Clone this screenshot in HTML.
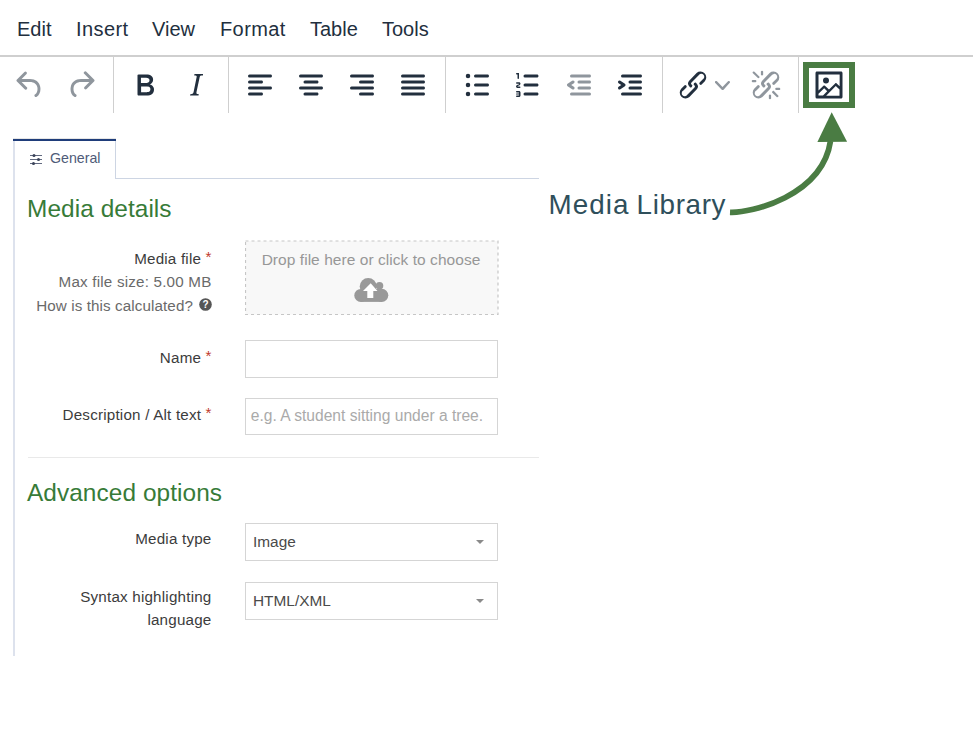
<!DOCTYPE html>
<html>
<head>
<meta charset="utf-8">
<title>Media Library</title>
<style>
html,body{margin:0;padding:0;background:#fff;}
body{width:973px;height:750px;position:relative;overflow:hidden;font-family:"Liberation Sans",sans-serif;}
.abs{position:absolute;}
.menu span{position:absolute;top:16.700px;font-size:20px;line-height:24px;color:#222f3e;white-space:nowrap;}
.hline{position:absolute;left:0;top:55.400px;width:973px;height:1.600px;background:#cfcfcf;}
.vsep{position:absolute;top:57px;width:1px;height:56px;background:#cfcfcf;}
.ic{position:absolute;width:36px;height:36px;fill:#222f3e;}
.ic.dis{fill:#222f3e;opacity:.5;}
.lbl{position:absolute;right:761.500px;white-space:nowrap;font-size:15.200px;letter-spacing:.2px;line-height:23px;color:#3c3c3c;text-align:right;}
.lbl .req{color:#c0392b;position:relative;top:-2px;letter-spacing:0;}
.sub{color:#6a6a6a;}
.h2{position:absolute;left:27px;font-size:24.400px;letter-spacing:.07px;line-height:28px;color:#377b38;white-space:nowrap;}
.inp{position:absolute;left:245px;width:251px;height:36px;border:1px solid #d5d5d5;background:#fff;font-size:15.4px;color:#aaa;}
.inp span{position:absolute;left:7px;top:6.500px;line-height:22px;white-space:nowrap;}
.sel span{color:#4a4a4a;}
.caret{position:absolute;right:13px;top:16px;width:0;height:0;border-left:4.200px solid transparent;border-right:4.200px solid transparent;border-top:4.200px solid #8a8a8a;}
</style>
</head>
<body>

<!-- menu bar -->
<div class="menu">
<span style="left:17px">Edit</span>
<span style="left:76px;letter-spacing:.4px">Insert</span>
<span style="left:152px">View</span>
<span style="left:220px;letter-spacing:.4px">Format</span>
<span style="left:310px">Table</span>
<span style="left:382px">Tools</span>
</div>
<div class="hline"></div>
<div class="vsep" style="left:113px"></div>
<div class="vsep" style="left:228px"></div>
<div class="vsep" style="left:445px"></div>
<div class="vsep" style="left:662px"></div>
<div class="vsep" style="left:798px"></div>

<!-- toolbar icons -->
<svg class="ic dis" style="left:12.200px;top:67px" viewBox="0 0 24 24"><path d="M6.4 8H12c3.7 0 6.2 2 6.800 5.100.6 2.700-.4 5.600-2.300 6.800a1 1 0 01-1-1.800c1.100-.6 1.800-2.700 1.400-4.600-.5-2.100-2.100-3.500-4.900-3.500H6.400l3.300 3.300a1 1 0 11-1.400 1.400l-5-5a1 1 0 010-1.400l5-5a1 1 0 011.400 1.400L6.400 8z"/></svg>
<svg class="ic dis" style="left:63px;top:67px" viewBox="0 0 24 24"><path d="M17.600 10H12c-2.800 0-4.400 1.400-4.900 3.500-.4 2 .3 4 1.400 4.600a1 1 0 11-1 1.800c-2-1.200-2.900-4.100-2.300-6.800.6-3 3-5.100 6.800-5.100h5.600l-3.300-3.300a1 1 0 111.400-1.400l5 5a1 1 0 010 1.400l-5 5a1 1 0 01-1.400-1.400l3.300-3.300z"/></svg>
<svg class="ic" style="left:127px;top:67px" viewBox="0 0 24 24"><path fill-rule="evenodd" d="M7.800 19c-.3 0-.5 0-.6-.2l-.2-.5V5.700c0-.2 0-.4.2-.5l.6-.2h5c1.500 0 2.700.3 3.500 1 .7.600 1.100 1.400 1.100 2.500a3 3 0 01-.6 1.900c-.4.600-1 1-1.600 1.200.4.100.9.300 1.300.6s.8.700 1 1.200c.4.400.5 1 .5 1.600 0 1.300-.4 2.300-1.300 3-.8.700-2.100 1-3.800 1H7.800zm5-8.300c.6 0 1.200-.1 1.600-.5.400-.3.600-.7.600-1.300 0-1.100-.8-1.700-2.300-1.700H9.300v3.500h3.400zm.5 6c.7 0 1.300-.1 1.700-.4.400-.4.600-.9.600-1.500s-.2-1-.7-1.400c-.4-.3-1-.4-2-.4H9.400v3.800h4z"/></svg>
<svg class="ic" style="left:178px;top:67px" viewBox="0 0 24 24"><path fill-rule="evenodd" d="M16.700 4.700l-.1.900h-.3c-.6 0-1 0-1.400.3-.3.300-.4.600-.5 1.100l-2.100 9.800v.6c0 .5.400.8 1.400.8h.2l-.2.800H8l.2-.8h.2c1.100 0 1.800-.5 2-1.500l2-9.800.1-.5c0-.6-.4-.8-1.400-.8h-.3l.2-.9h5.800z"/></svg>

<svg class="ic" style="left:242px;top:67px" viewBox="0 0 24 24"><path d="M5 5h14c.6 0 1 .4 1 1s-.4 1-1 1H5a1 1 0 110-2zm0 4h8c.6 0 1 .4 1 1s-.4 1-1 1H5a1 1 0 110-2zm0 8h8c.6 0 1 .4 1 1s-.4 1-1 1H5a1 1 0 010-2zm0-4h14c.6 0 1 .4 1 1s-.4 1-1 1H5a1 1 0 010-2z"/></svg>
<svg class="ic" style="left:293px;top:67px" viewBox="0 0 24 24"><path d="M5 5h14c.6 0 1 .4 1 1s-.4 1-1 1H5a1 1 0 110-2zm3 4h8c.6 0 1 .4 1 1s-.4 1-1 1H8a1 1 0 110-2zm0 8h8c.6 0 1 .4 1 1s-.4 1-1 1H8a1 1 0 010-2zm-3-4h14c.6 0 1 .4 1 1s-.4 1-1 1H5a1 1 0 010-2z"/></svg>
<svg class="ic" style="left:344px;top:67px" viewBox="0 0 24 24"><path d="M5 5h14c.6 0 1 .4 1 1s-.4 1-1 1H5a1 1 0 110-2zm6 4h8c.6 0 1 .4 1 1s-.4 1-1 1h-8a1 1 0 010-2zm0 8h8c.6 0 1 .4 1 1s-.4 1-1 1h-8a1 1 0 010-2zm-6-4h14c.6 0 1 .4 1 1s-.4 1-1 1H5a1 1 0 010-2z"/></svg>
<svg class="ic" style="left:395px;top:67px" viewBox="0 0 24 24"><path d="M5 5h14c.6 0 1 .4 1 1s-.4 1-1 1H5a1 1 0 110-2zm0 4h14c.6 0 1 .4 1 1s-.4 1-1 1H5a1 1 0 110-2zm0 4h14c.6 0 1 .4 1 1s-.4 1-1 1H5a1 1 0 010-2zm0 4h14c.6 0 1 .4 1 1s-.4 1-1 1H5a1 1 0 010-2z"/></svg>

<svg class="ic" style="left:459px;top:67px" viewBox="0 0 24 24"><path d="M11 5h8c.6 0 1 .4 1 1s-.4 1-1 1h-8a1 1 0 010-2zm0 6h8c.6 0 1 .4 1 1s-.4 1-1 1h-8a1 1 0 010-2zm0 6h8c.6 0 1 .4 1 1s-.4 1-1 1h-8a1 1 0 010-2z"/><circle cx="6" cy="6" r="1.5"/><circle cx="6" cy="12" r="1.5"/><circle cx="6" cy="18" r="1.5"/></svg>
<svg class="ic" style="left:510px;top:67px" viewBox="0 0 24 24"><path d="M10 17h8c.6 0 1 .4 1 1s-.4 1-1 1h-8a1 1 0 010-2zm0-6h8c.6 0 1 .4 1 1s-.4 1-1 1h-8a1 1 0 010-2zm0-6h8c.6 0 1 .4 1 1s-.4 1-1 1h-8a1 1 0 110-2zM6 4v3.500c0 .3-.2.500-.5.500a.5.500 0 01-.5-.5V5h-.5a.5.500 0 010-1H6zm-1 8.800l.2.200h1.300c.3 0 .5.200.5.500s-.2.500-.5.500H4.900a1 1 0 01-.9-1V13c0-.4.300-.8.600-1l1.200-.4.200-.3a.2.200 0 00-.2-.2H4.500a.5.500 0 01-.5-.5c0-.3.200-.5.500-.5h1.600c.5 0 .9.400.9 1v.1c0 .4-.3.800-.6 1l-1.200.4-.2.300zM7 17v2c0 .6-.4 1-1 1H4.500a.5.500 0 010-1h1.200c.2 0 .3-.1.300-.3 0-.2-.1-.3-.3-.3H4.400a.4.400 0 110-.8h1.300c.2 0 .3-.1.300-.3 0-.2-.1-.3-.3-.3H4.500a.5.500 0 110-1H6c.6 0 1 .4 1 1z"/></svg>
<svg class="ic dis" style="left:561px;top:67px" viewBox="0 0 24 24"><path d="M7 5h12c.6 0 1 .4 1 1s-.4 1-1 1H7a1 1 0 110-2zm5 4h7c.6 0 1 .4 1 1s-.4 1-1 1h-7a1 1 0 010-2zm0 4h7c.6 0 1 .4 1 1s-.4 1-1 1h-7a1 1 0 010-2zm-5 4h12a1 1 0 010 2H7a1 1 0 010-2zm1.600-3.800a1 1 0 01-1.200 1.600l-3-2a1 1 0 010-1.600l3-2a1 1 0 011.200 1.600L6.800 12l1.800 1.200z"/></svg>
<svg class="ic" style="left:612px;top:67px" viewBox="0 0 24 24"><path d="M7 5h12c.6 0 1 .4 1 1s-.4 1-1 1H7a1 1 0 110-2zm5 4h7c.6 0 1 .4 1 1s-.4 1-1 1h-7a1 1 0 010-2zm0 4h7c.6 0 1 .4 1 1s-.4 1-1 1h-7a1 1 0 010-2zm-5 4h12a1 1 0 010 2H7a1 1 0 010-2zm-2.600-3.800L6.200 12l-1.800-1.200a1 1 0 011.200-1.600l3 2a1 1 0 010 1.600l-3 2a1 1 0 11-1.200-1.600z"/></svg>

<svg class="ic" style="left:675.300px;top:67px" viewBox="0 0 24 24"><path d="M6.200 12.300a1 1 0 011.400 1.400l-2 2a2 2 0 102.600 2.800l4.800-4.800a1 1 0 000-1.400 1 1 0 111.400-1.300 2.900 2.900 0 010 4L9.600 20a3.900 3.900 0 01-5.500-5.500l2-2zm11.600-.6a1 1 0 01-1.400-1.400l2-2a2 2 0 10-2.600-2.800L11 10.300a1 1 0 000 1.400A1 1 0 119.600 13a2.900 2.900 0 010-4L14.400 4a3.900 3.900 0 015.500 5.500l-2 2z"/></svg>
<svg class="abs" style="left:715.400px;top:78px;width:15px;height:15px;fill:#222f3e;opacity:.5" viewBox="0 0 10 10"><path d="M8.700 2.200c.3-.3.800-.3 1 0 .4.400.4.900 0 1.200L5.700 7.800c-.3.300-.9.300-1.200 0L.2 3.400a.8.800 0 010-1.200c.3-.3.800-.3 1.100 0L5 6l3.700-3.800z"/></svg>
<svg class="ic dis" style="left:748px;top:67px" viewBox="0 0 24 24"><path d="M6.200 12.300a1 1 0 011.400 1.400l-2 2a2 2 0 102.600 2.800l4.800-4.800a1 1 0 000-1.400 1 1 0 111.400-1.300 2.900 2.900 0 010 4L9.600 20a3.900 3.900 0 01-5.500-5.500l2-2zm11.600-.6a1 1 0 01-1.400-1.400l2.100-2a2 2 0 10-2.700-2.800L11 10.300a1 1 0 000 1.400A1 1 0 119.600 13a2.900 2.900 0 010-4L14.400 4a3.900 3.900 0 015.500 5.500l-2 2zM7.600 6.300a.8.800 0 01-1 1.100L3.300 4.200a.7.700 0 111-1l3.200 3.100zM5.100 8.600a.8.800 0 010 1.500H3a.8.800 0 010-1.500H5zm5-3.500a.8.800 0 01-1.500 0V3a.8.800 0 011.500 0V5zm6 11.800a.8.800 0 011-1l3.200 3.200a.8.800 0 01-1 1L16 17zm-2.200 2a.8.800 0 011.500 0V21a.8.800 0 01-1.500 0V19zm5-3.500a.7.700 0 110-1.500H21a.8.800 0 010 1.500H19z"/></svg>

<!-- highlighted image button -->
<div class="abs" style="left:803px;top:62px;width:40px;height:34px;border:6px solid #4a7c43;"></div>
<svg class="ic" style="left:811px;top:67px" viewBox="0 0 24 24"><path d="M5 15.700l3.300-3.200c.3-.3.700-.3 1 0L12 15l4.100-4c.3-.4.800-.4 1 0l2 1.900V5H5v10.700zM5 18V19h3l2.800-2.900-2-2L5 17.900zm14-3l-2.500-2.400-6.400 6.500H19v-4zM4 3h16c.6 0 1 .4 1 1v16c0 .6-.4 1-1 1H4a1 1 0 01-1-1V4c0-.6.4-1 1-1zm6 8a2 2 0 100-4 2 2 0 000 4z"/></svg>

<!-- arrow + callout -->
<svg class="abs" style="left:0;top:0" width="973" height="750" viewBox="0 0 973 750">
<path d="M730 212.300 C750.700 213.200 822.200 196.200 830.500 141" fill="none" stroke="#4a7c43" stroke-width="5.700"/>
<path d="M831.700 112.200 L817.400 142 L847.100 141.700 Z" fill="#4a7c43"/>
</svg>
<div class="abs" style="left:548.400px;top:188.200px;font-size:27.800px;line-height:34px;letter-spacing:1.1px;color:#2f4f5b;white-space:nowrap;">Media</div>
<div class="abs" style="left:636.600px;top:188.200px;font-size:27.800px;line-height:34px;letter-spacing:.65px;color:#2f4f5b;white-space:nowrap;">Library</div>

<!-- form panel -->
<div class="abs" style="left:13px;top:139px;width:2px;height:517px;background:#dde2ed;"></div>
<div class="abs" style="left:13px;top:138px;width:103px;height:1.500px;background:#e6e6e6;"></div><div class="abs" style="left:13px;top:139.300px;width:103px;height:1.500px;background:#1f3d7a;"></div>
<div class="abs" style="left:115px;top:141px;width:1px;height:38px;background:#cdd5e3;"></div>
<div class="abs" style="left:115px;top:178px;width:424px;height:1px;background:#cdd5e3;"></div>
<svg class="abs" style="left:29.300px;top:152.800px" width="14" height="13" viewBox="0 0 14 13"><g fill="none" stroke="#626a80" stroke-width="1.100"><path d="M1 2.500h12M1 6.500h12M1 10.500h12"/></g><g fill="#3a4358"><circle cx="5" cy="2.500" r="1.500"/><circle cx="9.500" cy="6.500" r="1.500"/><circle cx="4.500" cy="10.500" r="1.500"/></g></svg>
<div class="abs" style="left:50px;top:149px;font-size:14.200px;line-height:18px;color:#4f5b78;white-space:nowrap;">General</div>

<div class="h2" style="top:195px">Media details</div>

<div class="lbl" style="top:246.500px">Media file <span class="req">*</span></div>
<div class="lbl sub" style="top:270px">Max file size: 5.00 MB</div>
<div class="lbl sub" style="top:293.500px;right:780px;letter-spacing:.1px">How is this calculated?</div>
<svg class="abs" style="left:198.500px;top:298px" width="13" height="13" viewBox="0 0 13 13"><circle cx="6.500" cy="6.500" r="6.300" fill="#555"/><text x="6.500" y="10.300" font-size="10" font-weight="bold" text-anchor="middle" fill="#fff" font-family="Liberation Sans, sans-serif">?</text></svg>

<svg class="abs" style="left:245px;top:240px" width="254" height="75" viewBox="0 0 254 75"><rect x="0.500" y="1" width="252.500" height="73.500" fill="#f8f8f8" stroke="#c6c6c6" stroke-width="1.200" stroke-dasharray="3 3"/></svg>
<div class="abs" style="left:245px;top:248.800px;width:252px;text-align:center;font-size:15.500px;letter-spacing:.05px;line-height:22px;color:#979797;white-space:nowrap;">Drop file here or click to choose</div>
<svg class="abs" style="left:0;top:0" width="973" height="750" viewBox="0 0 973 750"><g fill="#999"><circle cx="368.200" cy="286.400" r="8.500"/><circle cx="360.800" cy="295.400" r="6.500"/><circle cx="379.500" cy="285.800" r="3.800"/><circle cx="381.700" cy="295.300" r="6.600"/><rect x="360.800" y="289" width="20.900" height="12.900"/></g><path d="M370.700 283.300 L377.500 290.900 H373.300 V298 H367.300 V290.900 H363 Z" fill="#fff"/></svg>

<div class="lbl" style="top:346px">Name <span class="req">*</span></div>
<div class="inp" style="top:340px"></div>

<div class="lbl" style="top:403.300px">Description / Alt text <span class="req">*</span></div>
<div class="inp" style="top:398px;height:35px"><span style="left:4.800px;top:5.500px;font-size:15.600px">e.g. A student sitting under a tree.</span></div>

<div class="abs" style="left:28px;top:457px;width:511px;height:1px;background:#e9e9e9;"></div>

<div class="h2" style="top:479px">Advanced options</div>

<div class="lbl" style="top:526.800px">Media type</div>
<div class="inp sel" style="top:523px"><span>Image</span><i class="caret"></i></div>

<div class="lbl" style="top:584.800px">Syntax highlighting<br>language</div>
<div class="inp sel" style="top:582px"><span>HTML/XML</span><i class="caret"></i></div>

</body>
</html>
